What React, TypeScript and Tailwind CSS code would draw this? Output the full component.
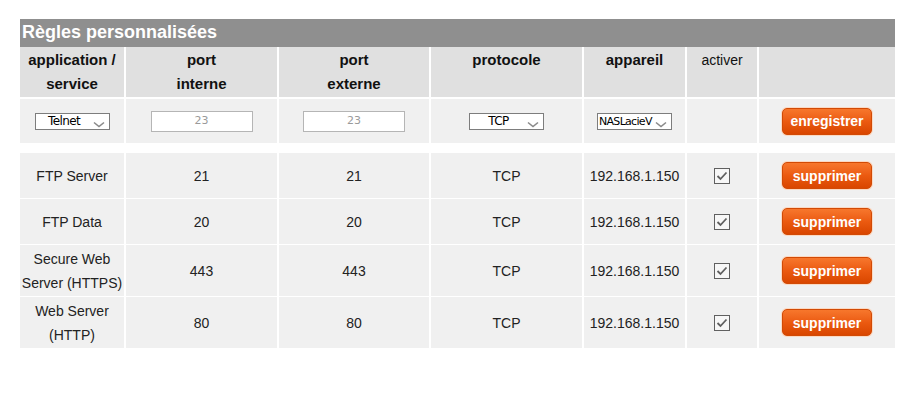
import React from "react";

const font = { fontFamily: '"Liberation Sans", Arial, sans-serif' };

function Chevron() {
  return (
    <svg width="12" height="7" viewBox="0 0 12 7" className="shrink-0">
      <polyline points="1,1.5 6,5.5 11,1.5" fill="none" stroke="#8a8a8a" strokeWidth="1.6" />
    </svg>
  );
}

function FakeSelect({ label, left }: { label: string; left?: boolean }) {
  return (
    <div className="flex h-[17px] w-[75px] items-center border border-[#7d7d7d] bg-white">
      <div
        className={
          left
            ? "flex-1 whitespace-nowrap pl-[1px] text-left text-[11px] leading-[15px] text-black"
            : "flex-1 overflow-hidden whitespace-nowrap text-center text-[12px] leading-[15px] text-black"
        }
        style={{
          fontFamily: '"DejaVu Sans", "Liberation Sans", sans-serif',
          letterSpacing: left ? "-0.7px" : "-0.6px",
        }}
      >
        {label}
      </div>
      <div className="mr-[4px] mt-[6px] flex w-[12px] items-end">
        <Chevron />
      </div>
    </div>
  );
}

function FakeInput({ value }: { value: string }) {
  return (
    <div
      className="flex h-[21px] w-[102px] items-center justify-center border border-[#b5b5b5] bg-white text-[11px] text-[#9a9a9a]"
      style={{ fontFamily: '"DejaVu Sans", "Liberation Sans", sans-serif' }}
    >
      {value}
    </div>
  );
}

function OrangeButton({ label }: { label: string }) {
  return (
    <div className="rounded-[6px] bg-[#fbd9c3] p-[1px]">
      <div className="flex h-[27px] w-[90px] items-center justify-center rounded-[5px] border border-[#d24a05] bg-gradient-to-b from-[#f7772c] via-[#eb5a10] to-[#d94600] text-[14px] font-bold text-white">
        {label}
      </div>
    </div>
  );
}

function Check() {
  return (
    <div className="flex h-[16px] w-[16px] items-center justify-center border border-[#606060] bg-[#f7f7f7]">
      <svg width="12" height="12" viewBox="0 0 12 12">
        <polyline points="1.5,6 4.5,9 10.5,2.5" fill="none" stroke="#606060" strokeWidth="1.8" />
      </svg>
    </div>
  );
}

const rows = [
  { name: ["FTP Server"], pi: "21", pe: "21", h: "h-[45px]" },
  { name: ["FTP Data"], pi: "20", pe: "20", h: "h-[45px]" },
  { name: ["Secure Web", "Server (HTTPS)"], pi: "443", pe: "443", h: "h-[51px]" },
  { name: ["Web Server", "(HTTP)"], pi: "80", pe: "80", h: "h-[51px]" },
];

const cols = "grid grid-cols-[104px_151px_150px_151px_101px_70px_136px] gap-x-[2px]";

export default function App() {
  return (
    <div className="h-[403px] w-[918px] bg-white pl-[20px] pt-[19px] text-[#222]" style={font}>
      <div className="w-[875px]">
        <div className="h-[28px] bg-[#8f8f8f] pl-[2px] text-[18px] font-bold leading-[27px] text-white">
          Règles personnalisées
        </div>
        <div className={cols + " h-[50px]"}>
          {[
            ["application /", "service"],
            ["port", "interne"],
            ["port", "externe"],
            ["protocole"],
            ["appareil"],
          ].map((lines, i) => (
            <div key={i} className="bg-[#e0e0e0] pt-[1px] text-center text-[15px] font-bold leading-[24px] text-[#111]">
              {lines.map((l) => (
                <div key={l}>{l}</div>
              ))}
            </div>
          ))}
          <div className="bg-[#e0e0e0] pt-[1px] text-center text-[14px] leading-[24px] text-[#111]">activer</div>
          <div className="bg-[#e0e0e0]" />
        </div>
        <div className="h-[2px]" />
        <div className={cols + " h-[44px]"}>
          <div className="flex items-center justify-center bg-[#f0f0f0]">
            <FakeSelect label="Telnet" />
          </div>
          <div className="flex items-center justify-center bg-[#f0f0f0]">
            <FakeInput value="23" />
          </div>
          <div className="flex items-center justify-center bg-[#f0f0f0]">
            <FakeInput value="23" />
          </div>
          <div className="flex items-center justify-center bg-[#f0f0f0]">
            <FakeSelect label="TCP" />
          </div>
          <div className="flex items-center justify-center bg-[#f0f0f0]">
            <FakeSelect label="NASLacieV" left />
          </div>
          <div className="bg-[#f0f0f0]" />
          <div className="flex items-center justify-center bg-[#f0f0f0]">
            <OrangeButton label="enregistrer" />
          </div>
        </div>
        <div className="h-[10px]" />
        <div className="flex flex-col gap-y-[1px]">
          {rows.map((r, idx) => (
            <div key={idx} className={cols + " " + r.h + " text-[14px] leading-[24px]"}>
              <div className="flex flex-col items-center justify-center bg-[#f0f0f0] text-center">
                {r.name.map((n) => (
                  <div key={n} className="whitespace-nowrap">
                    {n}
                  </div>
                ))}
              </div>
              <div className="flex items-center justify-center bg-[#f0f0f0]">{r.pi}</div>
              <div className="flex items-center justify-center bg-[#f0f0f0]">{r.pe}</div>
              <div className="flex items-center justify-center bg-[#f0f0f0]">TCP</div>
              <div className="flex items-center justify-center bg-[#f0f0f0]">192.168.1.150</div>
              <div className="flex items-center justify-center bg-[#f0f0f0]">
                <Check />
              </div>
              <div className="flex items-center justify-center bg-[#f0f0f0]">
                <OrangeButton label="supprimer" />
              </div>
            </div>
          ))}
        </div>
      </div>
    </div>
  );
}
